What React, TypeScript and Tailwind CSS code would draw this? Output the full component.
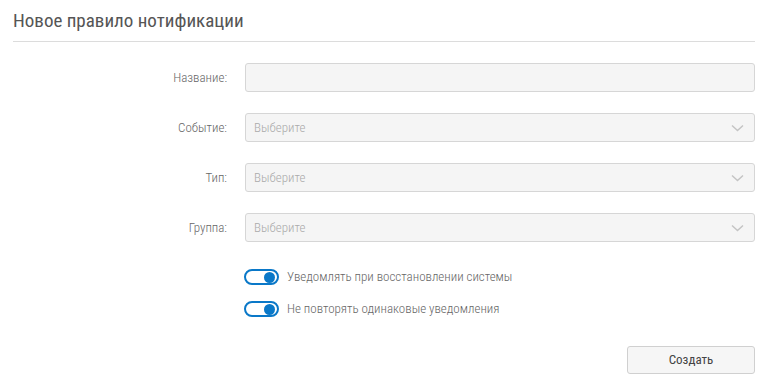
import React from "react";

const font = { fontFamily: '"Roboto Condensed","Liberation Sans Narrow","DejaVu Sans Condensed",Roboto,sans-serif' };

function Chevron() {
  return (
    <svg width="13" height="8" viewBox="0 0 13 8" className="shrink-0">
      <path d="M1 1.5l5.5 5 5.5-5" fill="none" stroke="#c4c4c4" strokeWidth="1.5" />
    </svg>
  );
}

function Row({ label, select }: { label: string; select?: boolean }) {
  return (
    <div className="flex items-center">
      <div className="w-[232px] pr-[18px] text-right text-[13px] font-light text-[#666]">{label}</div>
      <div className="flex-1 h-[29px] rounded-[3px] border border-[#d6d6d6] bg-[#f5f5f5] flex items-center justify-between pl-[8px] pr-[10px]">
        {select ? (
          <>
            <span className="text-[13px] font-light text-[#aaa]">Выберите</span>
            <Chevron />
          </>
        ) : null}
      </div>
    </div>
  );
}

function Toggle({ label }: { label: string }) {
  return (
    <div className="flex items-center gap-[8px] h-[16px]">
      <div className="w-[35px] h-[16px] rounded-full border-2 border-[#0a78c8] bg-white flex items-center justify-end pr-[2px]">
        <div className="w-[11px] h-[11px] rounded-full bg-[#0a78c8]" />
      </div>
      <span className="text-[13px] leading-[16px] font-light text-[#666]">{label}</span>
    </div>
  );
}

export default function App() {
  return (
    <div className="w-[768px] h-[387px] bg-white pl-[13px] pr-[13px]" style={font}>
      <div className="h-[42px] border-b border-[#dcdcdc] pt-[9px]">
        <h1 className="text-[19px] leading-[24px] text-[#555]">Новое правило нотификации</h1>
      </div>
      <div className="pt-[21px] flex flex-col gap-[21px]">
        <Row label="Название:" />
        <Row label="Событие:" select />
        <Row label="Тип:" select />
        <Row label="Группа:" select />
      </div>
      <div className="pl-[231px] pt-[27px] flex flex-col gap-[16px]">
        <Toggle label="Уведомлять при восстановлении системы" />
        <Toggle label="Не повторять одинаковые уведомления" />
      </div>
      <div className="flex justify-end pt-[29px]">
        <button className="w-[128px] h-[28px] rounded-[3px] border border-[#d0d0d0] bg-[#f6f6f6] text-[13px] text-[#444]">
          Создать
        </button>
      </div>
    </div>
  );
}
